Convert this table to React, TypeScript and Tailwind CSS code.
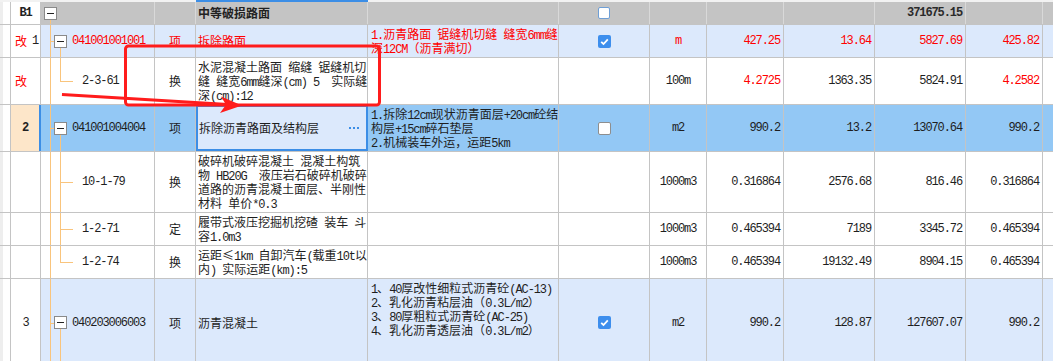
import type { ReactNode } from "react";

const cjk = "font-['Noto_Sans_CJK_SC',sans-serif] text-[12px] leading-[14px]";
const mono = "font-['Liberation_Mono','Noto_Sans_CJK_SC',monospace] text-[12px] tracking-[-1.1px]";

// ascii runs get the narrow mono face, the rest stays CJK
function Txt({ s }: { s: string }) {
  const parts = s.split(/([\x20-\x7e]+)/).filter(Boolean);
  return (
    <>
      {parts.map((p, i) =>
        /^[\x20-\x7e]+$/.test(p) ? (
          <span key={i} className={mono}>
            {p}
          </span>
        ) : (
          <span key={i}>{p}</span>
        )
      )}
    </>
  );
}

function Lines({ lines, red }: { lines: string[]; red?: boolean }) {
  return (
    <div className={`${cjk} ${red ? "text-[#ff0000]" : "text-[#1e1e1e]"}`}>
      {lines.map((l) => (
        <div key={l} className="whitespace-pre h-[14px]">
          <Txt s={l} />
        </div>
      ))}
    </div>
  );
}

function MinusBox() {
  return (
    <div className="w-[13px] h-[13px] border border-[#8a8a8a] bg-white flex items-center justify-center">
      <div className="w-[7px] h-px bg-[#222]" />
    </div>
  );
}

type TreeKind = "head" | "parent" | "child" | "childLast";

function Tree({ kind, code, red }: { kind: TreeKind; code?: string; red?: boolean }) {
  const orange = "bg-[#f9c47c]";
  return (
    <div className="relative h-full w-full">
      {kind === "head" ? (
        <div className={`absolute left-[9px] top-[18px] bottom-0 w-px ${orange}`} />
      ) : (
        <div className={`absolute left-[9px] top-0 bottom-0 w-px ${orange}`} />
      )}
      {kind === "head" && (
        <div className="absolute left-[3px] inset-y-0 flex items-center">
          <MinusBox />
        </div>
      )}
      {kind === "parent" && (
        <>
          <div className={`absolute left-[9px] top-1/2 w-[4px] h-px ${orange}`} />
          <div className={`absolute left-[19px] top-1/2 bottom-0 w-px ${orange}`} />
          <div className="absolute left-[13px] inset-y-0 flex items-center">
            <MinusBox />
          </div>
        </>
      )}
      {kind === "child" && <div className={`absolute left-[19px] top-0 bottom-0 w-px ${orange}`} />}
      {kind === "childLast" && <div className={`absolute left-[19px] top-0 h-1/2 w-px ${orange}`} />}
      {(kind === "child" || kind === "childLast") && (
        <div className={`absolute left-[19px] top-1/2 w-[13px] h-px ${orange}`} />
      )}
      {code && (
        <div
          className={`absolute inset-y-0 flex items-center ${kind === "parent" ? "left-[31px]" : "left-[41px]"} ${mono} ${
            red ? "text-[#ff0000]" : "text-[#1e1e1e]"
          }`}
        >
          {code}
        </div>
      )}
    </div>
  );
}

function Check({ state }: { state: "on" | "off" | "head" }) {
  if (state === "on")
    return (
      <div className="w-[13px] h-[13px] rounded-[2px] bg-[#3d8eed] flex items-center justify-center">
        <svg width="13" height="13" viewBox="0 0 13 13">
          <path d="M3.2 6.8 L5.5 9 L9.8 4.3" fill="none" stroke="#fff" strokeWidth="1.8" />
        </svg>
      </div>
    );
  if (state === "head")
    return <div className="w-[12px] h-[12px] rounded-[2px] border border-[#6f9fd6] bg-white" />;
  return <div className="w-[13px] h-[13px] rounded-[2px] border border-[#8e8e8e] bg-white" />;
}

type Kind = "header" | "item" | "child" | "sel";
type Num = [string, boolean] | null;

type RowProps = {
  h: string;
  kind: Kind;
  no: ReactNode;
  tree: ReactNode;
  type?: string;
  typeRed?: boolean;
  name: ReactNode;
  features?: string[];
  featRed?: boolean;
  featTop?: boolean;
  check?: "on" | "off" | "head";
  unit?: string;
  unitRed?: boolean;
  nums: Num[];
};

const numW = ["w-[77px]", "w-[91px]", "w-[91px]", "w-[77px]"];

function Row(p: RowProps) {
  const bg =
    p.kind === "header"
      ? "bg-[#c4c4c4]"
      : p.kind === "item"
      ? "bg-[#dce9fc]"
      : p.kind === "sel"
      ? "bg-[#93c8f5]"
      : "bg-white";
  const line = p.kind === "header" ? "border-r border-[#d9d9d9]" : "border-r border-[#c4c4c4]";
  const noBg = p.kind === "sel" ? "bg-[#fde6c9] border-r-2 border-[#3c8ee6]" : "bg-white border-r border-[#c4c4c4]";
  return (
    <div className={`flex ${p.h} border-b border-[#c4c4c4]`}>
      <div className="w-[11px] shrink-0 bg-white border-l-[3px] border-l-[#eeeeee] border-r border-r-[#c4c4c4]" />
      <div className={`w-[30px] shrink-0 flex items-center ${noBg}`}>{p.no}</div>
      <div className={`w-[114px] shrink-0 ${bg} ${line}`}>{p.tree}</div>
      <div
        className={`w-[41px] shrink-0 flex items-center justify-center ${cjk} ${bg} ${line} ${
          p.typeRed ? "text-[#ff0000]" : "text-[#1e1e1e]"
        }`}
      >
        {p.type}
      </div>
      {p.kind === "sel" ? (
        <div className="w-[172px] shrink-0 flex items-center pl-[1px] bg-[#dce9fc] border-2 border-[#3c8ee6]">
          {p.name}
          <div className="ml-auto mr-[7px] flex gap-[2px]">
            <div className="w-[2px] h-[2px] bg-[#3c8ee6]" />
            <div className="w-[2px] h-[2px] bg-[#3c8ee6]" />
            <div className="w-[2px] h-[2px] bg-[#3c8ee6]" />
          </div>
        </div>
      ) : (
        <div className={`w-[172px] shrink-0 flex items-center pl-[2px] ${bg} ${line}`}>{p.name}</div>
      )}
      <div
        className={`w-[191px] shrink-0 flex pl-[3px] ${p.featTop ? "items-start pt-[2px]" : "items-center"} ${bg} ${line}`}
      >
        {p.features && <Lines lines={p.features} red={p.featRed} />}
      </div>
      <div className={`w-[91px] shrink-0 flex items-center justify-center ${bg} ${line}`}>
        {p.check && <Check state={p.check} />}
      </div>
      <div
        className={`w-[57px] shrink-0 flex items-center justify-center ${bg} ${line} ${mono} ${
          p.unitRed ? "text-[#ff0000]" : "text-[#1e1e1e]"
        }`}
      >
        {p.unit}
      </div>
      {p.nums.map((n, i) => (
        <div key={i} className={`${numW[i]} shrink-0 flex items-center justify-end pr-[3px] ${bg} ${line}`}>
          {n && (
            <span
              className={`${mono} ${n[1] ? "text-[#ff0000]" : "text-[#1e1e1e]"} ${
                p.kind === "header" ? "font-bold text-[#2a2a2a]" : ""
              }`}
            >
              {n[0]}
            </span>
          )}
        </div>
      ))}
      <div className={`flex-1 ${bg}`} />
    </div>
  );
}

const red = "text-[#ff0000]";

export default function App() {
  return (
    <div className="relative w-full h-[361px] overflow-hidden bg-white">
      <div className="flex h-[2px]">
        <div className="w-[196px] bg-[#f2f2f2]" />
        <div className="w-[172px] bg-[#3c8ee6]" />
        <div className="flex-1 bg-[#f2f2f2]" />
      </div>

      <Row
        h="h-[23px]"
        kind="header"
        no={<div className={`w-full text-center font-bold ${mono} text-[#222]`}>B1</div>}
        tree={<Tree kind="head" />}
        name={<span className={`${cjk} font-bold text-[#222]`}>中等破损路面</span>}
        check="head"
        nums={[null, null, ["371675.15", false], null]}
      />

      <Row
        h="h-[33px]"
        kind="item"
        no={
          <div className={`flex items-center pl-[4px] gap-[5px] ${cjk}`}>
            <span className={red}>改</span>
            <span className={`${mono} text-[#222]`}>1</span>
          </div>
        }
        tree={<Tree kind="parent" code="041001001001" red />}
        type="项"
        typeRed
        name={<span className={`${cjk} ${red}`}>拆除路面</span>}
        features={["1.沥青路面 锯缝机切缝 缝宽6mm缝", "深12CM（沥青满切）"]}
        featRed
        check="on"
        unit="m"
        unitRed
        nums={[
          ["427.25", true],
          ["13.64", true],
          ["5827.69", true],
          ["425.82", true],
        ]}
      />

      <Row
        h="h-[47px]"
        kind="child"
        no={<span className={`pl-[4px] ${cjk} ${red}`}>改</span>}
        tree={<Tree kind="childLast" code="2-3-61" />}
        type="换"
        name={<Lines lines={["水泥混凝土路面 缩缝 锯缝机切", "缝 缝宽6mm缝深(cm) 5  实际缝", "深(cm):12"]} />}
        unit="100m"
        nums={[
          ["4.2725", true],
          ["1363.35", false],
          ["5824.91", false],
          ["4.2582", true],
        ]}
      />

      <Row
        h="h-[47px]"
        kind="sel"
        no={<div className={`w-full text-center font-bold ${mono} text-[#222]`}>2</div>}
        tree={<Tree kind="parent" code="041001004004" />}
        type="项"
        name={<span className={`${cjk} text-[#1e1e1e]`}>拆除沥青路面及结构层</span>}
        features={["1.拆除12cm现状沥青面层+20cm砼结", "构层+15cm碎石垫层", "2.机械装车外运，运距5km"]}
        check="off"
        unit="m2"
        nums={[
          ["990.2", false],
          ["13.2", false],
          ["13070.64", false],
          ["990.2", false],
        ]}
      />

      <Row
        h="h-[61px]"
        kind="child"
        no={null}
        tree={<Tree kind="child" code="10-1-79" />}
        type="换"
        name={
          <Lines
            lines={[
              "破碎机破碎混凝土 混凝土构筑",
              "物 HB20G  液压岩石破碎机破碎",
              "道路的沥青混凝土面层、半刚性",
              "材料 单价*0.3",
            ]}
          />
        }
        unit="1000m3"
        nums={[
          ["0.316864", false],
          ["2576.68", false],
          ["816.46", false],
          ["0.316864", false],
        ]}
      />

      <Row
        h="h-[33px]"
        kind="child"
        no={null}
        tree={<Tree kind="child" code="1-2-71" />}
        type="定"
        name={<Lines lines={["履带式液压挖掘机挖碴 装车 斗", "容1.0m3"]} />}
        unit="1000m3"
        nums={[
          ["0.465394", false],
          ["7189", false],
          ["3345.72", false],
          ["0.465394", false],
        ]}
      />

      <Row
        h="h-[33px]"
        kind="child"
        no={null}
        tree={<Tree kind="childLast" code="1-2-74" />}
        type="换"
        name={<Lines lines={["运距≤1km 自卸汽车(载重10t以", "内) 实际运距(km):5"]} />}
        unit="1000m3"
        nums={[
          ["0.465394", false],
          ["19132.49", false],
          ["8904.15", false],
          ["0.465394", false],
        ]}
      />

      <Row
        h="h-[88px]"
        kind="item"
        no={<div className={`w-full text-center ${mono} text-[#222]`}>3</div>}
        tree={<Tree kind="parent" code="040203006003" />}
        type="项"
        name={<span className={`${cjk} text-[#1e1e1e]`}>沥青混凝土</span>}
        features={[
          "1、40厚改性细粒式沥青砼(AC-13)",
          "2、乳化沥青粘层油（0.3L/m2）",
          "3、80厚粗粒式沥青砼(AC-25)",
          "4、乳化沥青透层油（0.3L/m2）",
        ]}
        featTop
        check="on"
        unit="m2"
        nums={[
          ["990.2", false],
          ["128.87", false],
          ["127607.07", false],
          ["990.2", false],
        ]}
      />

      {/* red markup drawn over the grid */}
      <svg className="absolute inset-0 pointer-events-none" width="1053" height="361">
        <rect x="125.5" y="46" width="254" height="59" rx="3" fill="none" stroke="#ff1c1c" strokeWidth="3" />
        <line x1="62" y1="94.5" x2="228" y2="104.5" stroke="#ff1c1c" strokeWidth="3" />
        <polygon points="242,105.5 221,96.5 226,104.8 220,113" fill="#ff1c1c" />
      </svg>
    </div>
  );
}
